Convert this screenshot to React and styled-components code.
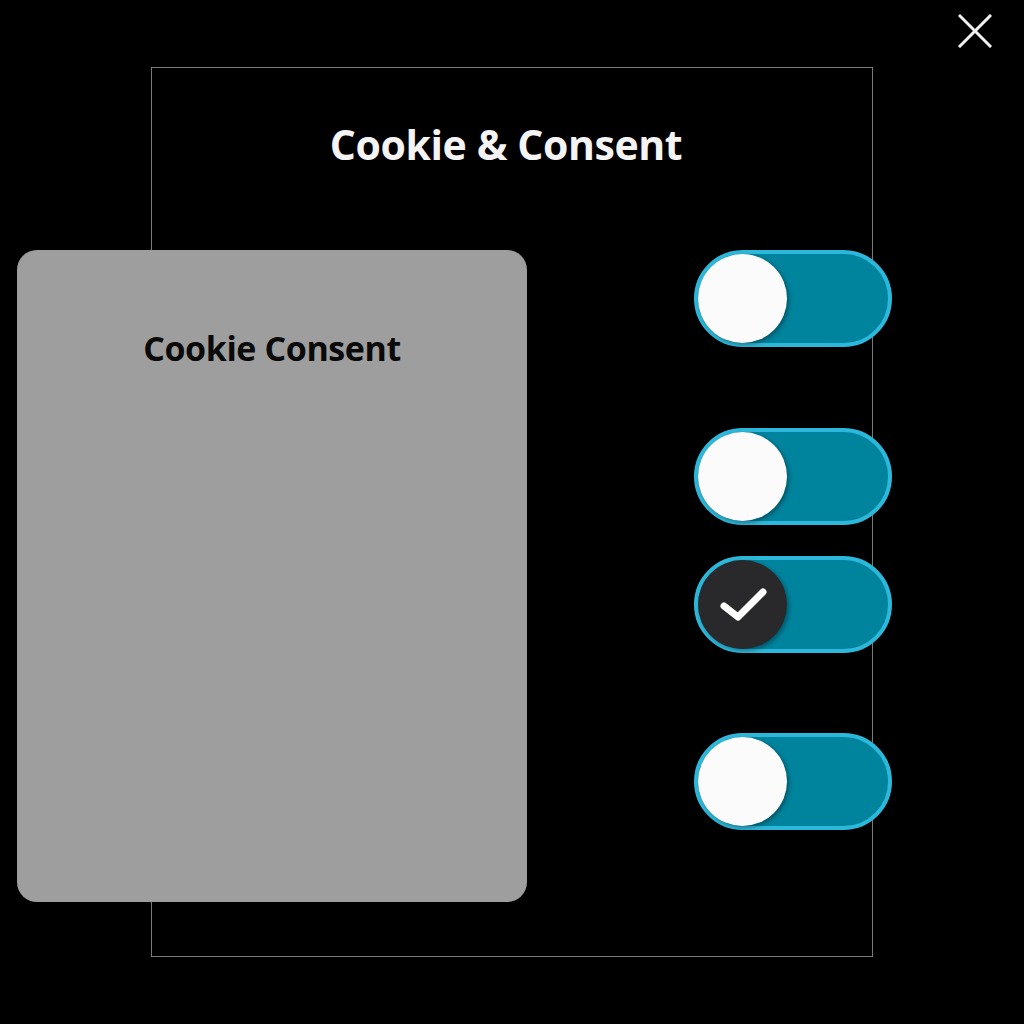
import React, { useState } from "react";
import styled, { createGlobalStyle } from "styled-components";

const GlobalStyle = createGlobalStyle`
  html, body {
    margin: 0;
    padding: 0;
    background: #000;
  }
  body {
    font-family: "Open Sans", "Liberation Sans", sans-serif;
  }
`;

const App = () => {
  const [toggles, setToggles] = useState([false, false, true, false]);
  const gaps = [0, 81, 31, 80];

  const flip = (i) => {
    setToggles(toggles.map((t, j) => (j === i ? !t : t)));
  };

  return (
    <Page>
      <GlobalStyle />
      <TopBar>
        <CloseButton aria-label="Close">
          <svg width="34" height="34" viewBox="0 0 34 34">
            <path
              d="M2 2 L32 32 M32 2 L2 32"
              stroke="#f2f2f2"
              strokeWidth="3"
              strokeLinecap="square"
              fill="none"
            />
          </svg>
        </CloseButton>
      </TopBar>
      <Panel>
        <Header>
          <Title>Cookie &amp; Consent</Title>
        </Header>
        <Content>
          <Card>
            <CardTitle>Cookie Consent</CardTitle>
          </Card>
          <ToggleList>
            {toggles.map((on, i) => (
              <Switch
                key={i}
                $gap={gaps[i]}
                onClick={() => flip(i)}
                aria-pressed={on}
              >
                <Knob $checked={on}>
                  {on && (
                    <svg width="56" height="56" viewBox="0 0 56 56">
                      <path
                        d="M9 29 L23 40 L48 15"
                        stroke="#fff"
                        strokeWidth="7"
                        strokeLinecap="round"
                        strokeLinejoin="round"
                        fill="none"
                      />
                    </svg>
                  )}
                </Knob>
              </Switch>
            ))}
          </ToggleList>
        </Content>
      </Panel>
    </Page>
  );
};

export default App;

const Page = styled.div`
  width: 1024px;
  height: 1024px;
  background: #000;
  overflow: hidden;
`;

const TopBar = styled.div`
  height: 67px;
  display: flex;
  justify-content: flex-end;
  align-items: flex-start;
  padding-right: 32px;
  box-sizing: border-box;
`;

const CloseButton = styled.button`
  margin-top: 14px;
  width: 34px;
  height: 34px;
  padding: 0;
  border: none;
  background: transparent;
  cursor: pointer;
  display: flex;
`;

const Panel = styled.div`
  margin-left: 151px;
  width: 722px;
  height: 890px;
  border: 1px solid #7a7a7a;
  box-sizing: border-box;
`;

const Header = styled.div`
  height: 182px;
  display: flex;
  justify-content: center;
  padding-top: 50px;
  padding-right: 12px;
  box-sizing: border-box;
`;

const Title = styled.h1`
  margin: 0;
  font-size: 41px;
  line-height: 52px;
  font-weight: 700;
  letter-spacing: -0.4px;
  color: #f4f4f4;
`;

const Content = styled.div`
  display: grid;
  grid-template-columns: 510px 198px;
  column-gap: 167px;
  margin-left: -135px;
`;

const Card = styled.div`
  height: 652px;
  background: #9e9e9e;
  border-radius: 20px;
  display: flex;
  justify-content: center;
  padding-top: 75px;
  box-sizing: border-box;
`;

const CardTitle = styled.h2`
  margin: 0;
  font-size: 34px;
  line-height: 46px;
  font-weight: 700;
  letter-spacing: -0.4px;
  color: #0a0a0a;
`;

const ToggleList = styled.div`
  display: flex;
  flex-direction: column;
`;

const Switch = styled.button`
  margin-top: ${(p) => p.$gap}px;
  width: 198px;
  height: 97px;
  padding: 0 0 0 4px;
  border: 4px solid #2cb8da;
  border-radius: 49px;
  background: #00839d;
  box-sizing: border-box;
  display: flex;
  align-items: center;
  cursor: pointer;
`;

const Knob = styled.span`
  width: 89px;
  height: 89px;
  border-radius: 50%;
  margin-left: -4px;
  background: ${(p) => (p.$checked ? "#29292b" : "#fbfbfb")};
  box-shadow: 2px 2px 4px rgba(0, 0, 0, 0.35);
  display: flex;
  align-items: center;
  justify-content: center;
`;
